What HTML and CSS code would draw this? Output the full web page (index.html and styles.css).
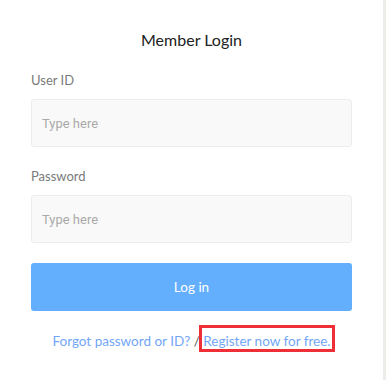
FILE: index.html
```html
<!DOCTYPE html>
<html lang="en">
<head>
<meta charset="utf-8">
<title>Member Login</title>
<link rel="stylesheet" href="styles.css">
</head>
<body>
<div class="panel">
  <h1 class="title">Member Login</h1>
  <form class="form">
    <div class="field">
      <label class="label" for="uid">User ID</label>
      <input class="input" id="uid" type="text" placeholder="Type here">
    </div>
    <div class="field">
      <label class="label" for="pw">Password</label>
      <input class="input" id="pw" type="password" placeholder="Type here">
    </div>
    <button class="btn" type="button">Log in</button>
  </form>
  <p class="links"><a class="link" href="#">Forgot password or ID?</a> <span class="sep">/</span> <a class="link highlight" href="#">Register now for free.</a></p>
</div>
</body>
</html>
```
FILE: styles.css
```css
html, body {
  margin: 0;
  padding: 0;
  background: #ffffff;
}
body {
  font-family: Lato, "Open Sans", sans-serif;
  width: 387px;
  height: 380px;
  overflow: hidden;
}
.panel {
  box-sizing: border-box;
  width: 386px;
  height: 380px;
  padding: 28px 31px 0 31px;
  border-right: 3px solid #ecece8;
  background: #ffffff;
}
.title {
  margin: 0;
  font-size: 16px;
  line-height: 23px;
  font-weight: 400;
  color: #222222;
  text-align: center;
}
.form {
  display: flex;
  flex-direction: column;
  margin-top: 19px;
  gap: 19px;
}
.field {
  display: flex;
  flex-direction: column;
  gap: 9px;
}
.label {
  font-size: 13px;
  line-height: 20px;
  color: #7a7a7a;
}
.input {
  box-sizing: border-box;
  height: 48px;
  width: 100%;
  margin: 0;
  border: 1px solid #ececec;
  border-radius: 3px;
  background: #f9f9f9;
  padding: 0 10px;
  font-family: Roboto, "Liberation Sans", sans-serif;
  font-size: 13px;
  color: #333;
  outline: none;
}
.input::placeholder {
  color: #aaaaaa;
}
.btn {
  box-sizing: border-box;
  height: 48px;
  width: 100%;
  margin-top: 1px;
  border: 0;
  border-radius: 3px;
  background: #64aefe;
  color: #ffffff;
  font-family: Lato, "Open Sans", sans-serif;
  font-size: 13.5px;
}
.links {
  margin: 20px 0 0 0;
  font-size: 13.5px;
  line-height: 20px;
  text-align: center;
}
.link {
  color: #72a6f8;
  text-decoration: none;
}
.sep {
  color: #555555;
}
.highlight {
  position: relative;
}
.highlight::after {
  content: "";
  position: absolute;
  left: -4px;
  right: -4px;
  top: -8px;
  bottom: -3px;
  border: 3px solid #ee2f37;
}
```
